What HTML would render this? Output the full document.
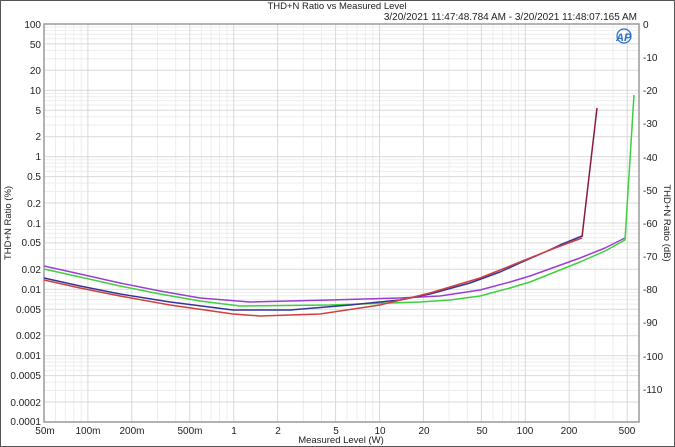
<!DOCTYPE html>
<html><head><meta charset="utf-8"><style>
html,body{margin:0;padding:0;background:#fff}
svg{display:block}
text{font-family:"Liberation Sans",sans-serif;font-size:10px;fill:#222}
</style></head><body>
<svg width="675" height="447" viewBox="0 0 675 447" xmlns="http://www.w3.org/2000/svg">
<rect x="0.5" y="0.5" width="674" height="446" fill="#fff" stroke="#555"/>
<g stroke="#ededed" stroke-width="1">
<path d="M55.5 24V422M65.3 24V422M73.8 24V422M81.2 24V422M157.5 24V422M175.7 24V422M201.3 24V422M211.1 24V422M219.6 24V422M227 24V422M303.3 24V422M321.5 24V422M347.1 24V422M356.9 24V422M365.4 24V422M372.8 24V422M449.1 24V422M467.3 24V422M492.9 24V422M502.7 24V422M511.2 24V422M518.6 24V422M594.9 24V422M613.1 24V422"/>
<path d="M44 390.4H639M44 382.1H639M44 370.4H639M44 365.9H639M44 362.1H639M44 358.7H639M44 324.1H639M44 315.8H639M44 304.1H639M44 299.6H639M44 295.8H639M44 292.4H639M44 257.7H639M44 249.4H639M44 237.7H639M44 233.2H639M44 229.4H639M44 226H639M44 191.4H639M44 183.1H639M44 171.4H639M44 166.9H639M44 163.1H639M44 159.7H639M44 125.1H639M44 116.8H639M44 105.1H639M44 100.6H639M44 96.8H639M44 93.4H639M44 58.7H639M44 50.4H639M44 38.7H639M44 34.2H639M44 30.4H639M44 27H639"/>
</g>
<g stroke="#d9d9d9" stroke-width="1">
<path d="M87.9 24V422M131.8 24V422M189.8 24V422M233.7 24V422M277.6 24V422M335.6 24V422M379.5 24V422M423.4 24V422M481.4 24V422M525.3 24V422M569.2 24V422M627.2 24V422"/>
<path d="M44 402H639M44 375.6H639M44 355.7H639M44 335.7H639M44 309.3H639M44 289.3H639M44 269.3H639M44 242.9H639M44 223H639M44 203H639M44 176.6H639M44 156.7H639M44 136.7H639M44 110.3H639M44 90.3H639M44 70.3H639M44 43.9H639"/>
</g>
<rect x="44" y="24" width="595" height="398" fill="none" stroke="#9a9a9a" stroke-width="1.5"/>
<g fill="none" stroke-width="1.5" stroke-linejoin="round">
<polyline stroke="#9b3fcf" points="44,266 80,274 120,283 160,291 200,298 250,302 330,300 400,298 440,296 480,290 510,282 530,276 555,267 580,258 605,248 625,238"/>
<polyline stroke="#3fcf3f" points="44,269 80,277 120,286 160,294 200,301 240,306 330,305 420,302 450,300 480,296 510,288 530,282 555,272 580,262 605,251 625,240 634,95"/>
<polyline stroke="#353599" points="44,278 80,286 120,294 170,302 233,310 290,310 350,305 400,300 430,294 470,283 500,272 520,263 545,252 560,245 582,236"/>
<polyline stroke="#d04040" points="44,280 80,288 120,296 170,305 233,314 260,316 320,314 380,305 430,293 480,278 510,266 530,258 555,248 582,238"/>
<polyline stroke="#8b1a3f" points="582,237 597,108"/>
</g>
<g font-size="9" fill="#2a6fc9"><text x="616" y="41" style="font-size:11px;font-weight:bold;font-style:italic;fill:#2a6fc9">AP</text></g>
<circle cx="624" cy="36" r="7" fill="none" stroke="#2a6fc9" stroke-width="1.2"/>
<text x="337" y="9" text-anchor="middle" style="font-size:9.5px">THD+N Ratio vs Measured Level</text>
<text x="637" y="20" text-anchor="end" style="font-size:10px">3/20/2021 11:47:48.784 AM - 3/20/2021 11:48:07.165 AM</text>
<g text-anchor="end" style="font-size:9.5px">
<text x="41" y="28">100</text><text x="41" y="48">50</text><text x="41" y="74">20</text><text x="41" y="94">10</text><text x="41" y="114">5</text><text x="41" y="140">2</text><text x="41" y="160">1</text><text x="41" y="180">0.5</text><text x="41" y="207">0.2</text><text x="41" y="227">0.1</text><text x="41" y="246">0.05</text><text x="41" y="273">0.02</text><text x="41" y="293">0.01</text><text x="41" y="313">0.005</text><text x="41" y="339">0.002</text><text x="41" y="359">0.001</text><text x="41" y="379">0.0005</text><text x="41" y="406">0.0002</text><text x="41" y="425">0.0001</text>
</g>
<g style="font-size:9.5px">
<text x="643" y="28">0</text><text x="643" y="61">-10</text><text x="643" y="94">-20</text><text x="643" y="127">-30</text><text x="643" y="161">-40</text><text x="643" y="194">-50</text><text x="643" y="227">-60</text><text x="643" y="260">-70</text><text x="643" y="293">-80</text><text x="643" y="326">-90</text><text x="643" y="360">-100</text><text x="643" y="393">-110</text>
</g>
<g text-anchor="middle" style="font-size:9.5px">
<text x="45" y="434">50m</text><text x="88" y="434">100m</text><text x="132" y="434">200m</text><text x="190" y="434">500m</text><text x="234" y="434">1</text><text x="278" y="434">2</text><text x="336" y="434">5</text><text x="380" y="434">10</text><text x="424" y="434">20</text><text x="482" y="434">50</text><text x="525" y="434">100</text><text x="569" y="434">200</text><text x="627" y="434">500</text>
</g>
<text x="341" y="443" text-anchor="middle" style="font-size:9.5px">Measured Level (W)</text>
<text transform="translate(11,223) rotate(-90)" text-anchor="middle" style="font-size:9.5px">THD+N Ratio (%)</text>
<text transform="translate(664,223) rotate(90)" text-anchor="middle" style="font-size:9.5px">THD+N Ratio (dB)</text>
</svg>
</body></html>
